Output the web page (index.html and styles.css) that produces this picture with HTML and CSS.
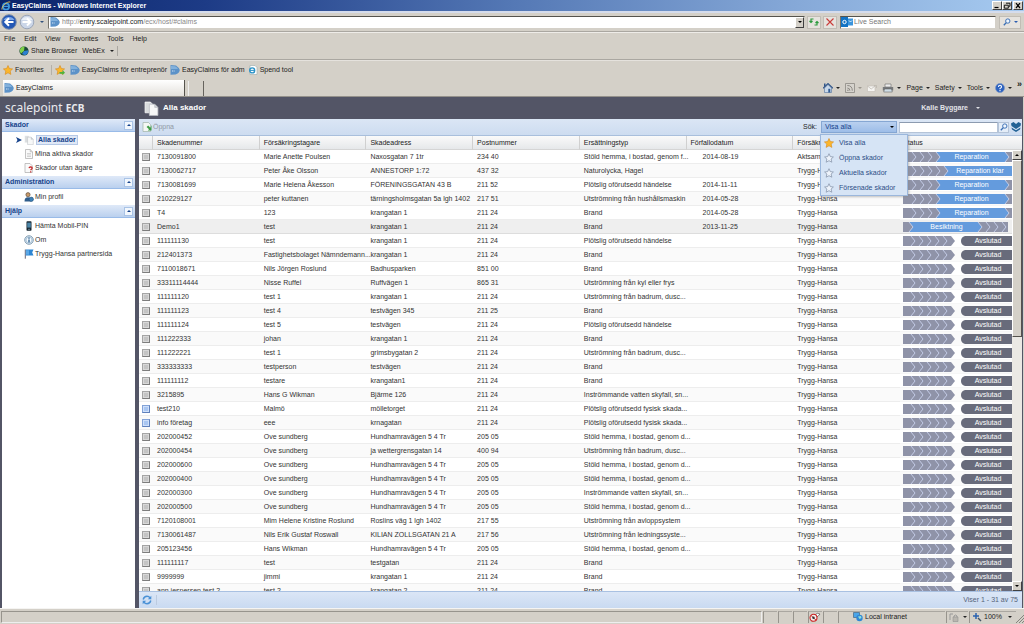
FILE: index.html
```
<!DOCTYPE html>
<html lang="sv">
<head>
<meta charset="utf-8">
<title>EasyClaims</title>
<link rel="stylesheet" href="styles.css">
</head>
<body>
<svg class="defs" aria-hidden="true">
  <symbol id="i-ie" viewBox="0 0 10 10"><circle cx="5" cy="5.4" r="3.1" fill="none" stroke="#3f9be0" stroke-width="1.7"/><path d="M2.4 5.4h5.4" stroke="#3f9be0" stroke-width="1.3"/><path d="M1 8.6C0 6 6 0 9.3 1" fill="none" stroke="#f1c64b" stroke-width=".9"/></symbol>
  <symbol id="i-page-ie" viewBox="0 0 10 10"><path d="M2 .5h5l2 2v7H2z" fill="#fff" stroke="#9aa" stroke-width=".6"/><circle cx="4.2" cy="5.4" r="2.5" fill="none" stroke="#2c93c8" stroke-width="1.4"/><path d="M2 5.4h4.4" stroke="#2c93c8"/></symbol>
  <symbol id="i-tag" viewBox="0 0 10 10"><path d="M.5 0 6 .4Q9.6 3 9.8 5 9.4 8 5.5 9.6L.5 9.8z" fill="#5c92c8"/><path d="M1 1l4 .2Q7 2 8 4H1z" fill="#83b1dc"/><path d="M2 6h3" stroke="#dcebf8" stroke-width=".9" stroke-dasharray="1 .6"/></symbol>
  <symbol id="i-star" viewBox="0 0 10 10"><path d="M5 .5l1.4 3 3.2.4-2.4 2.2.7 3.3L5 7.8 2.1 9.4l.7-3.3L.4 3.9l3.2-.4z" fill="#fbb62c" stroke="#d68a1c" stroke-width=".6"/></symbol>
  <symbol id="i-star-o" viewBox="0 0 10 10"><path d="M5 .7l1.3 2.9 3.1.4L7.100 6l.7 3.200L5 7.700 2.200 9.200l.7-3.200L.6 4l3.100-.4z" fill="#edf3fb" stroke="#8a98ad" stroke-width=".8"/></symbol>
  <symbol id="i-docs" viewBox="0 0 14 14"><path d="M1 1h5l2.500 2.500V11H1z" fill="#d9dcde" stroke="#fff" stroke-width=".7"/><path d="M5 3h5l3 3v7.500H5z" fill="#f7f8f8" stroke="#b8bcc2" stroke-width=".7"/><path d="M10 3v3h3" fill="#ced2d6" stroke="#aeb3b9" stroke-width=".5"/></symbol>
  <symbol id="i-doc" viewBox="0 0 10 10"><path d="M1.500.5h4.700l2.300 2.300v6.700h-7z" fill="#fafafa" stroke="#aaa" stroke-width=".7"/><path d="M6.200.5v2.300h2.300" fill="#ddd" stroke="#aaa" stroke-width=".5"/><path d="M3 4.500h4M3 6h4M3 7.500h4" stroke="#bbb" stroke-width=".6"/></symbol>
  <symbol id="i-doc-q" viewBox="0 0 10 10"><path d="M1 .5h5l2.300 2.300v6.700H1z" fill="#fafafa" stroke="#aaa" stroke-width=".7"/><path d="M5 5.200q.2-1.400 1.700-1.400 1.500.1 1.500 1.300 0 .8-1 1.300-.5.300-.5.900M6.700 8.200v1.300" fill="none" stroke="#c32222" stroke-width="1.200"/></symbol>
  <symbol id="i-user" viewBox="0 0 10 10"><circle cx="4" cy="2.700" r="2.100" fill="#c79a6b" stroke="#4b3a2c" stroke-width=".6"/><path d="M.5 9.500Q.5 5.300 4 5.300t3.500 4.200z" fill="#2f5d8c"/><circle cx="7.300" cy="7.300" r="2.200" fill="#3c7fb5" stroke="#244a70" stroke-width=".5"/></symbol>
  <symbol id="i-phone" viewBox="0 0 10 10"><rect x="2.500" y=".3" width="5" height="9.400" rx=".8" fill="#16242f"/><rect x="3.200" y="1.600" width="3.600" height="5" fill="#4c86a8"/><path d="M4 8.300h2" stroke="#8ab" stroke-width=".7"/></symbol>
  <symbol id="i-info" viewBox="0 0 10 10"><circle cx="5" cy="5" r="4.300" fill="#d7e6f2" stroke="#7c96ad" stroke-width=".9"/><circle cx="5" cy="5" r="2.900" fill="#f5fafe" stroke="#5c88ad" stroke-width=".4"/><path d="M5 2.500v1.200M5 4.400v3.200" stroke="#235a8b" stroke-width="1.300"/></symbol>
  <symbol id="i-flag" viewBox="0 0 10 10"><path d="M1.300.5v9.200" stroke="#667" stroke-width="1"/><path d="M1.800.6h7.700L8.200 3.500l1.300 2.900H1.800z" fill="#2c86d3"/><path d="M2 1.200h3v4.500H2z" fill="#5ba8e6"/></symbol>
  <symbol id="i-mag" viewBox="0 0 10 10"><circle cx="6" cy="3.800" r="2.700" fill="#eef5fd" stroke="#3a6fb5" stroke-width="1.200"/><path d="M4 5.900 1 9" stroke="#3a6fb5" stroke-width="1.600"/></symbol>
  <symbol id="i-refresh" viewBox="0 0 10 10"><path d="M1.200 4.500Q2 1.300 5 1.300q2 0 3 1.600M8.800 5.500Q8 8.700 5 8.700q-2 0-3-1.600" fill="none" stroke="#4a91d6" stroke-width="1.400"/><path d="M9.300.8v3.500H5.800zM.7 9.200V5.700h3.500z" fill="#4a91d6"/></symbol>
  <symbol id="i-printer" viewBox="0 0 12 10"><path d="M3 1h6v3H3z" fill="#eee" stroke="#666" stroke-width=".6"/><path d="M.8 4h10.400v3.500H.8z" fill="#77797c"/><path d="M2.500 6h7l.8 3H1.700z" fill="#cfdde6" stroke="#555" stroke-width=".5"/></symbol>
  <symbol id="i-home" viewBox="0 0 10 10"><path d="M1.500 5v4.500h7V5L5 1.500z" fill="#c8d8ea" stroke="#53719a" stroke-width=".6"/><path d="M0 5.300 5 .6l5 4.700" fill="none" stroke="#31568a" stroke-width="1.200"/><path d="M5.300 5.800h2v3.700h-2z" fill="#315c94"/><path d="M1 .5h1.500V3L1 4.200z" fill="#31568a"/></symbol>
  <symbol id="i-rss" viewBox="0 0 10 10"><rect x=".6" y=".6" width="8.800" height="8.800" fill="#d6d3cd" stroke="#8d8a84" stroke-width=".8"/><path d="M2.300 2.500q5 0 5 5.200M2.300 5q2.600 0 2.600 2.700" fill="none" stroke="#8d8a84" stroke-width="1"/><circle cx="2.900" cy="7.200" r=".8" fill="#8d8a84"/></symbol>
  <symbol id="i-mail" viewBox="0 0 10 8"><path d="M.5 2h7.500v5.500H.5z" fill="#f6f5f2" stroke="#c2beb6" stroke-width=".6"/><path d="M.5 2l3.700 3L8 2M7 1.500h2.500V4" fill="none" stroke="#b9b5ad" stroke-width=".7"/></symbol>
</svg>

<header class="titlebar">
  <svg class="i10"><use href="#i-ie"/></svg>
  <h1 class="window-title">EasyClaims - Windows Internet Explorer</h1>
  <div class="window-buttons">
    <button aria-label="Minimize"><svg viewBox="0 0 8 7"><path d="M1.500 5.500h4" stroke="#000" stroke-width="1.200"/></svg></button>
    <button aria-label="Restore"><svg viewBox="0 0 8 7"><path d="M3 1.200h4v3H6M1.300 3.200h4v3h-4z" fill="none" stroke="#000" stroke-width=".9"/></svg></button>
    <button class="close" aria-label="Close"><svg viewBox="0 0 8 7"><path d="M2 1.200 6 6M6 1.200 2 6" stroke="#000" stroke-width="1.200"/></svg></button>
  </div>
</header>

<div class="address-row">
  <button class="bare" aria-label="Back"><svg class="nav" viewBox="0 0 16 16"><circle cx="8" cy="8" r="7.300" fill="#2458b5" stroke="#7d8da8"/><path d="M2.500 6a6 5 0 0 1 11 0z" fill="#7fa8e8"/><path d="M12.500 8H5M8 4.300 4.300 8 8 11.700" fill="none" stroke="#fff" stroke-width="2"/></svg></button>
  <button class="bare" aria-label="Forward"><svg class="nav" viewBox="0 0 16 16"><circle cx="8" cy="8" r="6.800" fill="#cbd6e8" stroke="#9aa5b8"/><path d="M2.500 6a6 5 0 0 1 11 0z" fill="#e9eff8"/><path d="M3.500 8H11M8 4.500 11.500 8 8 11.500" fill="none" stroke="#fff" stroke-width="2"/></svg></button>
  <button class="bare history" aria-label="Recent pages"><i class="tri"></i></button>
  <div class="address">
    <svg class="i10"><use href="#i-tag"/></svg>
    <label class="url"><span class="dim">http://</span>entry.scalepoint.com<span class="dim">/ecx/host/#claims</span></label>
    <button class="classic" aria-label="Show addresses"><i class="tri"></i></button>
  </div>
  <button class="tool" aria-label="Refresh"><svg class="i10" viewBox="0 0 10 10"><path d="M4.500 2H2v3M.5 4 2 5.500 3.500 4M5.500 8H8V5M6.500 6 8 4.500 9.500 6" fill="none" stroke="#2c9a3d" stroke-width="1.200"/></svg></button>
  <button class="tool" aria-label="Stop"><svg class="i10" viewBox="0 0 10 10"><path d="M1.500 1.500l7 7M8.500 1.500l-7 7" stroke="#c93b38" stroke-width="1.100"/></svg></button>
  <div class="live">
    <svg class="i12" viewBox="0 0 12 10"><rect width="7" height="10" fill="#1273c4"/><path d="M7 1.500h5v7H7z" fill="#3b95dc"/><circle cx="3.500" cy="5" r="1.700" fill="none" stroke="#fff"/><path d="M8 3.500l1.500 1.500L11 3.500" fill="none" stroke="#fff" stroke-width=".8"/></svg>
    <input aria-label="Live Search" placeholder="Live Search">
  </div>
  <button class="tool live-go" aria-label="Search"><svg class="i8"><use href="#i-mag"/></svg><i class="tri blue"></i></button>
</div>

<div class="menus">
  <nav class="menubar"><a href="#file">File</a><a href="#edit">Edit</a><a href="#view">View</a><a href="#favorites">Favorites</a><a href="#tools">Tools</a><a href="#help">Help</a></nav>
  <div class="webex">
    <svg class="i10" viewBox="0 0 10 10"><circle cx="5" cy="5" r="4.600" fill="#1c4a39"/><path d="M.8 4Q2 .5 5.500.6L5 5 2 7.500Q.6 6 .8 4z" fill="#7fd04a"/><path d="M5 5l4.300-.8Q9.500 8 6 9.300L3 8z" fill="#2c7fd0"/></svg>
    <button class="bare">Share Browser</button>
    <button class="bare webex-menu">WebEx <i class="tri"></i></button>
  </div>
</div>

<nav class="favorites">
  <a href="#favs"><svg class="i10"><use href="#i-star"/></svg>Favorites</a>
  <a class="add" href="#add" aria-label="Add to favorites"><svg class="i10" viewBox="0 0 10 10"><use href="#i-star"/><path d="M4.500 7h3V5L10 7.700 7.500 10V8.700h-3z" fill="#4db33c"/></svg></a>
  <a href="#f1"><svg class="i10"><use href="#i-tag"/></svg>EasyClaims för entreprenör</a>
  <a href="#f2"><svg class="i10"><use href="#i-tag"/></svg>EasyClaims för adm</a>
  <a href="#f3"><svg class="i10"><use href="#i-page-ie"/></svg>Spend tool</a>
</nav>

<div class="tabs">
  <a class="tab" href="#tab"><svg class="i10"><use href="#i-tag"/></svg>EasyClaims</a>
  <button class="new-tab" aria-label="New tab"></button>
  <div class="commands">
    <button class="bare" aria-label="Home"><svg class="i10"><use href="#i-home"/></svg><i class="tri"></i></button>
    <button class="bare" aria-label="Feeds"><svg class="i10"><use href="#i-rss"/></svg><i class="tri faint"></i></button>
    <button class="bare" aria-label="Mail"><svg class="i10"><use href="#i-mail"/></svg></button>
    <button class="bare" aria-label="Print"><svg class="i12"><use href="#i-printer"/></svg><i class="tri"></i></button>
    <button class="bare">Page<i class="tri"></i></button>
    <button class="bare">Safety<i class="tri"></i></button>
    <button class="bare">Tools<i class="tri"></i></button>
    <button class="bare" aria-label="Help"><svg class="i10" viewBox="0 0 10 10"><circle cx="5" cy="5" r="4.500" fill="#2c62c0" stroke="#7d96c4" stroke-width=".7"/><path d="M3.500 4q0-1.700 1.500-1.700T6.500 4q0 .8-1.500 1.500v.7M5 7v1.200" fill="none" stroke="#fff" stroke-width="1.100"/></svg><i class="tri"></i></button>
    <button class="bare more" aria-label="More">»</button>
  </div>
</div>

<div class="app">
  <header class="app-header">
    <div class="logo">scalepoint <b>ECB</b></div>
    <svg class="i14"><use href="#i-docs"/></svg>
    <h2>Alla skador</h2>
    <button class="bare account">Kalle Byggare <i class="tri"></i></button>
  </header>
  <div class="columns">
    <aside class="sidebar">
      <section>
        <h3>Skador<button aria-label="Fäll ihop Skador"><i class="tri up"></i></button></h3>
        <ul>
          <li class="current"><svg class="pointer" viewBox="0 0 6 6"><path d="M0 0l6 3-6 3 1.500-3z" fill="#15428b"/></svg><svg class="i10"><use href="#i-docs"/></svg><a href="#alla">Alla skador</a></li>
          <li><svg class="i10"><use href="#i-doc"/></svg><a href="#mina">Mina aktiva skador</a></li>
          <li><svg class="i10"><use href="#i-doc-q"/></svg><a href="#utan">Skador utan ägare</a></li>
        </ul>
      </section>
      <section>
        <h3>Administration<button aria-label="Fäll ihop Administration"><i class="tri up"></i></button></h3>
        <ul><li><svg class="i10"><use href="#i-user"/></svg><a href="#profil">Min profil</a></li></ul>
      </section>
      <section>
        <h3>Hjälp<button aria-label="Fäll ihop Hjälp"><i class="tri up"></i></button></h3>
        <ul>
          <li><svg class="i10"><use href="#i-phone"/></svg><a href="#pin">Hämta Mobil-PIN</a></li>
          <li><svg class="i10"><use href="#i-info"/></svg><a href="#om">Om</a></li>
          <li><svg class="i10"><use href="#i-flag"/></svg><a href="#partner">Trygg-Hansa partnersida</a></li>
        </ul>
      </section>
    </aside>

    <main>
      <div class="toolbar">
        <button class="bare open" disabled><svg class="i10" viewBox="0 0 10 10"><path d="M1 .5h5.500l2 2v7H1z" fill="#f4f7f4" stroke="#9fb3a8" stroke-width=".7"/><path d="M9.500 3v5.500H5.800L7 7.300 4.600 5l1.600-1.500 2.200 2.300z" fill="#3f9c46"/></svg>Öppna</button>
        <label class="find" for="query">Sök:</label>
        <div class="filter">
          <button class="filter-button" aria-haspopup="listbox" aria-expanded="true">Visa alla<i class="tri"></i></button>
          <ul class="filter-menu" role="listbox">
            <li role="option" aria-selected="true"><svg class="i10"><use href="#i-star"/></svg>Visa alla</li>
            <li role="option"><svg class="i10"><use href="#i-star-o"/></svg>Öppna skador</li>
            <li role="option"><svg class="i10"><use href="#i-star-o"/></svg>Aktuella skador</li>
            <li role="option"><svg class="i10"><use href="#i-star-o"/></svg>Försenade skador</li>
          </ul>
        </div>
        <input id="query" class="query">
        <button class="go" aria-label="Sök"><svg class="i8"><use href="#i-mag"/></svg></button>
        <button class="bare expand" aria-label="Visa fler sökfält"><svg class="i10" viewBox="0 0 10 10"><path d="M0 1.500 2.500 0 5 2 7.500 0 10 1.500 9.500 4 5 7 .5 4zM.5 5.500 5 8.200 9.500 5.500 9 7.500 5 10 1 7.500z" fill="#236295"/></svg></button>
      </div>
      <div class="grid">
        <table>
          <colgroup><col class="c-icon"><col span="7"><col class="c-status"></colgroup>
          <thead><tr><th></th><th>Skadenummer</th><th>Försäkringstagare</th><th>Skadeadress</th><th>Postnummer</th><th>Ersättningstyp</th><th>Förfallodatum</th><th>Försäkringsbolag</th><th>Status</th></tr></thead>
          <tbody id="rows"></tbody>
        </table>
        <div class="scrollbar"><button class="classic" aria-label="Upp"><i class="tri up"></i></button><div class="track"><div class="thumb"></div></div><button class="classic" aria-label="Ned"><i class="tri"></i></button></div>
      </div>
      <footer class="pager"><button class="bare" aria-label="Uppdatera"><svg class="i10"><use href="#i-refresh"/></svg></button><span>Viser 1 - 31 av 75</span></footer>
    </main>
  </div>
</div>

<footer class="statusbar">
  <div class="fill"></div><div class="cell"></div><div class="cell"></div><div class="cell"></div>
  <div class="cell"><svg class="i12" viewBox="0 0 12 10"><path d="M6 3Q8 0 11 2 9 5 7 5z" fill="#fff" stroke="#555" stroke-width=".7"/><circle cx="4.500" cy="5.800" r="3.500" fill="#f3eeee" stroke="#c22" stroke-width="1.100"/><path d="M2 3.400 7 8.200" stroke="#c22"/><circle cx="4.500" cy="5.800" r="1.200" fill="#333"/></svg></div>
  <div class="cell"></div>
  <div class="cell zone"><svg class="i10" viewBox="0 0 10 10"><path d="M.5.5h6v5h-6z" fill="#4aa5e8" stroke="#246" stroke-width=".5"/><circle cx="6.500" cy="6" r="3.200" fill="#2f86d5"/><path d="M5 4.500l3-.5.5 2-2 1z" fill="#8fe0d8"/></svg>Local intranet</div>
  <div class="cell lock"><svg class="i10" viewBox="0 0 10 10"><path d="M1 8V2h3M5 5V4q1.500-2 3 0v1" fill="none" stroke="#999" stroke-width="1"/><path d="M4 5h5v4.500H4z" fill="#b9b6b0" stroke="#888" stroke-width=".5"/></svg><i class="tri"></i></div>
  <div class="cell scale"><svg class="i10" viewBox="0 0 10 10"><path d="M4 1v6M1 4h6" stroke="#2a62b0" stroke-width="1.500"/><path d="M6 6l3 3" stroke="#456" stroke-width="1.400"/></svg>100%<i class="tri"></i></div>
  <svg class="grip" viewBox="0 0 8 8"><path d="M0 8 8 0M3 8l5-5M6 8l2-2" stroke="#86837d"/></svg>
</footer>
<script src="app.js"></script>
</body>
</html>
```
FILE: styles.css
```
* { box-sizing: border-box; }
body {
  margin: 0;
  height: 100vh;
  display: flex;
  flex-direction: column;
  overflow: hidden;
  background: #d4d0c8;
  color: #222;
  font: 7px/10px "Liberation Sans", Arial, sans-serif;
}
a { color: inherit; text-decoration: none; }
ul { list-style: none; margin: 0; padding: 0; }
h1, h2, h3 { margin: 0; font-size: 7px; }
svg { display: block; flex: none; }
button, input { font: inherit; color: inherit; margin: 0; padding: 0; border: 0; border-radius: 0; }
button { display: flex; align-items: center; justify-content: center; flex: none; }
.defs { position: absolute; width: 0; height: 0; }
.bare { background: none; gap: 3px; }
.i8 { width: 8px; height: 8px; }
.i10 { width: 10px; height: 10px; }
.i12 { width: 12px; height: 10px; }
.i14 { width: 15px; height: 15px; }
.tri { display: block; flex: none; border: 2px solid transparent; border-top-color: currentColor; border-bottom: 0; }
.tri.up { border-top: 0; border-bottom: 2px solid currentColor; }
.tri.faint { color: #9a968e; }
.tri.blue { color: #2a5db0; }
.classic { background: #d4d0c8; border: 1px solid; border-color: #fff #404040 #404040 #fff; color: #000; }

.titlebar { display: flex; align-items: center; height: 11px; padding: 0 1px; gap: 1px; color: #fff; background: linear-gradient(90deg, #0a246a, #1d3b86 20%, #5478b5 50%, #86a9d8 78%, #a6caf0); }
.window-title { flex: 1; }
.window-buttons { display: flex; }
.window-buttons button { width: 10px; height: 9px; background: #d4d0c8; border: 1px solid; border-color: #fff #404040 #404040 #fff; }
.window-buttons svg { width: 8px; height: 7px; }
.window-buttons .close { margin-left: 1px; }

.address-row { display: flex; align-items: center; height: 21px; padding: 0 3px 0 1px; gap: 2px; border-top: 2px solid #d5dcec; border-bottom: 1px solid #aaa7a1; box-shadow: 0 1px #eeece8; }
.nav { width: 16px; height: 16px; }
.history { width: 9px; color: #33527c; }
.address { display: flex; align-items: center; flex: 1; height: 13px; gap: 2px; padding-left: 1px; background: #fff; border: 1px solid #77746c; border-color: #55534d #d4d0c8 #d4d0c8 #77746c; }
.url { flex: 1; }
.dim { color: #888; }
.address .classic { width: 9px; height: 11px; }
.tool { width: 14px; height: 13px; border: 1px solid #c1bdb5; background: #e6e3de; }
.live { display: flex; align-items: center; width: 156px; height: 13px; margin-left: 1px; gap: 1px; background: #fff; border: 1px solid; border-color: #55534d #d4d0c8 #d4d0c8 #77746c; }
.live input { flex: 1; min-width: 0; height: 10px; background: none; outline: 0; }
.live input::placeholder { color: #777; opacity: 1; }
.live-go { width: 22px; gap: 3px; margin-left: 1px; }

.menus { padding: 1px 4px 2px; border-bottom: 1px solid #aaa7a1; box-shadow: 0 1px #e5e2dd; }
.menubar { display: flex; align-items: center; height: 12px; gap: 9px; }
.webex { display: flex; align-items: center; height: 12px; padding-left: 15px; gap: 2px; }
.webex-menu { margin-left: 3px; padding-right: 3px; gap: 5px; border-right: 1px solid #aaa7a1; }

.favorites { display: flex; align-items: center; height: 20px; padding-left: 3px; gap: 3px; }
.favorites a { display: flex; align-items: center; gap: 2px; }
.favorites .add { margin: 0 2px 0 4px; padding-left: 3px; border-left: 1px solid #b4b0a8; }

.tabs { display: flex; align-items: stretch; height: 17px; padding-left: 3px; border-bottom: 1px solid #94918b; }
.tab { display: flex; align-items: center; width: 182px; gap: 2px; padding-left: 1px; background: linear-gradient(#fff, #e4e1dc); border-right: 1px solid #55534d; }
.new-tab { width: 16px; margin: 1px 0 0 3px; background: #d4d0c8; border-left: 1px solid #eee; border-right: 1px solid #66635d; }
.commands { display: flex; align-items: center; margin-left: auto; padding-right: 2px; gap: 5px; }
.more { align-self: flex-start; font-weight: bold; font-size: 9px; height: 8px; }

.app { flex: 1; min-height: 0; display: flex; flex-direction: column; padding: 0 1px 0 2px; background: #535566; border-right: 1px solid #d4d0c8; }
.app-header { display: flex; align-items: center; height: 22px; color: #fff; }
.app-header h2 { margin-left: 4px; font-size: 8px; }
.logo { width: 142px; padding-left: 3px; color: #e9eaee; font: 12px/20px "Noto Sans", sans-serif; }
.logo b { font-size: 10px; }
.account { margin-left: auto; margin-right: 42px; gap: 8px; color: #e2e3e8; font-weight: bold; }
.columns { flex: 1; min-height: 0; display: flex; gap: 4px; }

.sidebar { width: 133px; background: #fff; color: #333; }
.sidebar h3 { display: flex; align-items: center; justify-content: space-between; height: 13px; padding: 0 2px 0 3px; color: #15428b; background: linear-gradient(#dfe9f8, #bad0ee); border-bottom: 1px solid #99bbe8; }
.sidebar h3 button { width: 9px; height: 9px; background: #f2f7fd; border: 1px solid #a9c3e6; }
.sidebar ul { padding: 1px 0; }
.sidebar li { display: flex; align-items: center; height: 14px; padding-left: 22px; gap: 1px; }
.sidebar .current { padding-left: 14px; gap: 2px; color: #15428b; font-weight: bold; }
.current a { line-height: 8px; padding: 0 1px; background: #dfe8f6; border: 1px solid #b5c8e6; }
.pointer { width: 6px; height: 6px; }

main { flex: 1; min-width: 0; display: flex; flex-direction: column; background: #fff; }
.toolbar { display: flex; align-items: center; height: 17px; padding: 0 1px 0 3px; background: linear-gradient(#dbe6f5, #cddcf0); border-bottom: 1px solid #a9bfdc; }
.open { gap: 1px; color: #8f98a5; }
.find { margin-left: auto; }
.filter { position: relative; margin: 0 2px 0 4px; }
.filter-button { width: 76px; height: 12px; justify-content: space-between; padding: 0 2px 0 3px; color: #15428b; background: linear-gradient(#b9d0ef, #9dbde8); border: 1px solid #86a7d3; }
.filter-button .tri { color: #000; }
.filter-menu { position: absolute; z-index: 2; top: 13px; left: -1px; width: 88px; background: #d6e4f5; color: #2c4d86; border: 1px solid #9bb7dc; box-shadow: 1px 1px 2px #8888; }
.filter-menu li { display: flex; align-items: center; height: 15px; padding-left: 3px; gap: 5px; }
.query { width: 99px; height: 11px; background: #fff; border: 1px solid #b5c4d8; border-top-color: #8c9bb0; }
.go { width: 11px; height: 11px; background: #e4edf8; border: 1px solid #b5c4d8; }
.expand { margin-left: 2px; }

.grid { position: relative; flex: 1; min-height: 0; overflow: hidden; }
table { width: 100%; table-layout: fixed; border-collapse: separate; border-spacing: 0; }
.c-icon { width: 14px; }
.c-status { width: 122px; }
th, td { height: 14px; padding: 0 0 0 4px; text-align: left; font-weight: normal; white-space: nowrap; line-height: 10px; }
th { background: linear-gradient(#fafafa, #e6e8ea); border-right: 1px solid #d0d0d0; border-bottom: 1px solid #d5d5d5; }
th:last-child { border-right: 0; }
td { color: #333; border-bottom: 1px solid #ededed; }
td:first-child { padding-left: 3px; }
th:last-child, td:last-child { padding-left: 3px; }
td:last-child { padding-right: 9px; border-bottom-color: #f6f6f6; }
td:nth-child(7) { padding-left: 16px; }
tbody tr:nth-child(even) { background: #fafafa; }
tbody tr.hover { background: #efefef; }
tr.hover td { border-bottom-color: #ddd; }
.box { display: block; width: 8px; height: 8px; background: #c4c4c4; border: 1px solid #7d7d7d; border-top-color: #a5a5a5; border-left-color: #a5a5a5; box-shadow: inset 0 0 0 1px #d8d8d8; }
.box.new { background: #a9c6f2; border-color: #84a3d8 #5f80bb #5f80bb #84a3d8; box-shadow: inset 0 0 0 1px #cfe0fa; }
.status { display: grid; align-items: center; height: 10px; color: #fff; }
.status > * { grid-area: 1 / 1; }
.status svg { width: 110px; height: 10px; }
.status span { text-align: center; }
.done span { padding-left: 60px; }
.repair span { padding-left: 27px; }
.ready span { padding-left: 44px; }
.inspect span { padding-right: 23px; }

.scrollbar { position: absolute; top: 14px; right: 0; bottom: 0; width: 10px; display: flex; flex-direction: column; background: #ebe9e4; }
.scrollbar button { width: 10px; height: 10px; }
.track { flex: 1; }
.thumb { height: 42%; background: #d4d0c8; border: 1px solid; border-color: #fff #55534d #55534d #fff; }

.pager { display: flex; align-items: center; justify-content: space-between; height: 17px; padding: 0 4px 0 3px; color: #56647a; background: linear-gradient(#dbe6f6, #c9daf1); border-top: 1px solid #a9c1e2; }
.pager button { padding-right: 4px; border-right: 1px solid #bccbe0; }

.statusbar { display: flex; align-items: center; height: 16px; padding: 1px 0 1px 1px; border-top: 1px solid #f5f4f2; }
.fill { flex: 1; height: 12px; border: 1px solid; border-color: #97948d #eee #eee #97948d; }
.cell { display: flex; align-items: center; gap: 2px; width: 14px; height: 12px; margin-left: 1px; border-left: 1px solid #97948d; border-top: 1px solid #aaa7a1; }
.zone { width: 107px; padding-left: 14px; }
.lock { width: 22px; padding-left: 2px; gap: 4px; }
.scale { width: 47px; padding-left: 2px; }
.scale .tri { margin-left: auto; margin-right: 4px; }
.grip { width: 8px; height: 8px; align-self: flex-end; }
```
FILE: app.js
```
const BADUM = 'Utströmning från badrum, dusc...';
const THEFT = 'Stöld hemma, i bostad, genom d...';
const SUDDEN = 'Plötslig oförutsedd händelse';
const RAIN = 'Inströmmande vatten skyfall, sn...';
const DAMAGE = 'Plötslig oförutsedd fysisk skada...';

// number, policy holder, address, postcode, type, due date, status, company
const claims = [
  ['7130091800', 'Marie Anette Poulsen', 'Naxosgatan 7 1tr', '234 40', 'Stöld hemma, i bostad, genom f...', '2014-08-19', 'repair', 'Aktsam'],
  ['7130062717', 'Peter Åke Olsson', 'ANNESTORP 1:72', '437 32', 'Naturolycka, Hagel', '', 'ready'],
  ['7130081699', 'Marie Helena Åkesson', 'FÖRENINGSGATAN 43 B', '211 52', SUDDEN, '2014-11-11', 'repair'],
  ['210229127', 'peter kuttanen', 'tärningsholmsgatan 5a lgh 1402', '217 51', 'Utströmning från hushållsmaskin', '2014-05-28', 'repair'],
  ['T4', '123', 'krangatan 1', '211 24', 'Brand', '2014-05-28', 'repair'],
  ['Demo1', 'test', 'krangatan 1', '211 24', 'Brand', '2013-11-25', 'inspect'],
  ['111111130', 'test', 'krangatan 1', '211 24', SUDDEN],
  ['212401373', 'Fastighetsbolaget Nämndemann...', 'krangatan 1', '211 24', 'Brand'],
  ['7110018671', 'Nils Jörgen Roslund', 'Badhusparken', '851 00', 'Brand'],
  ['33311114444', 'Nisse Ruffel', 'Ruffvägen 1', '865 31', 'Utströmning från kyl eller frys'],
  ['111111120', 'test 1', 'krangatan 1', '211 24', BADUM],
  ['111111123', 'test 4', 'testvägen 345', '211 25', 'Brand'],
  ['111111124', 'test 5', 'testvägen', '211 24', SUDDEN],
  ['111222333', 'johan', 'krangatan 1', '211 24', 'Brand'],
  ['111222221', 'test 1', 'grimsbygatan 2', '211 24', BADUM],
  ['333333333', 'testperson', 'testvägen', '211 24', 'Brand'],
  ['111111112', 'testare', 'krangatan1', '211 24', 'Brand'],
  ['3215895', 'Hans G Wikman', 'Bjärme 126', '211 24', RAIN],
  ['test210', 'Malmö', 'mölletorget', '211 24', DAMAGE],
  ['info företag', 'eee', 'krnagatan', '211 24', DAMAGE],
  ['202000452', 'Ove sundberg', 'Hundhamravägen 5 4 Tr', '205 05', THEFT],
  ['202000454', 'Ove sundberg', 'ja wettergrensgatan 14', '400 94', BADUM],
  ['202000600', 'Ove sundberg', 'Hundhamravägen 5 4 Tr', '205 05', THEFT],
  ['202000400', 'Ove sundberg', 'Hundhamravägen 5 4 Tr', '205 05', THEFT],
  ['202000300', 'Ove sundberg', 'Hundhamravägen 5 4 Tr', '205 05', RAIN],
  ['202000500', 'Ove sundberg', 'Hundhamravägen 5 4 Tr', '205 05', THEFT],
  ['7120108001', 'Mim Helene Kristine Roslund', 'Roslins väg 1 lgh 1402', '217 55', 'Utströmning från avloppsystem'],
  ['7130061487', 'Nils Erik Gustaf Roswall', 'KILIAN ZOLLSGATAN 21 A', '217 56', 'Utströmning från ledningssyste...'],
  ['205123456', 'Hans Wikman', 'Hundhamravägen 5 4 Tr', '205 05', THEFT],
  ['111111117', 'test', 'testgatan', '211 24', 'Brand'],
  ['9999999', 'jimmi', 'krangatan 1', '211 24', 'Brand'],
  ['ann jespersen test 2', 'test 2', 'krangatan 2', '211 24', 'Brand']
];

const labels = { done: 'Avslutad', repair: 'Reparation', ready: 'Reparation klar', inspect: 'Besiktning' };

function chevrons(tips) {
  return tips.map(x => `<path d="M${x - 4} 0l4 5-4 5" fill="none" stroke="#c3cbe6" stroke-width="1"/>`).join('');
}

function base(end) {
  return `<path d="M0 0h${end}v10H0z" fill="#8f93a8"/>`;
}

// The blue stage runs between two arrow tips; past the bar's edge it is cut square.
function stage(from, to) {
  return `<path d="M${from - 4} 0H${to - 4}L${to} 5l-4 5H${from - 4}L${from} 5z" fill="#649bdd"/>`;
}

const bars = {
  done: '<path d="M0 0h48l4 5-4 5H0z" fill="#8f93a8"/>' + chevrons([12, 20, 28, 36, 44]) +
    '<path d="M110 0H62Q58 1 58 5t4 5h48z" fill="#686b7b"/>',
  repair: base(110) + stage(37, 106) + chevrons([13, 21, 29, 37, 106]),
  ready: base(60) + stage(45, 120) + chevrons([13, 21, 29, 37, 45]),
  inspect: base(105) + stage(10, 79) + chevrons([10, 79, 87, 95, 103])
};

document.getElementById('rows').innerHTML = claims.map(c => {
  const [number, holder, address, postcode, type, due = '', status = 'done', company = 'Trygg-Hansa'] = c;
  const fresh = number === 'test210' || number === 'info företag';
  const cells = [number, holder, address, postcode, type, due, company].map(t => `<td>${t}</td>`).join('');
  return `<tr class="${status === 'inspect' ? 'hover' : ''}"><td><i class="box${fresh ? ' new' : ''}"></i></td>${cells}` +
    `<td><div class="status ${status}"><svg viewBox="0 0 110 10">${bars[status]}</svg><span>${labels[status]}</span></div></td></tr>`;
}).join('');
```
